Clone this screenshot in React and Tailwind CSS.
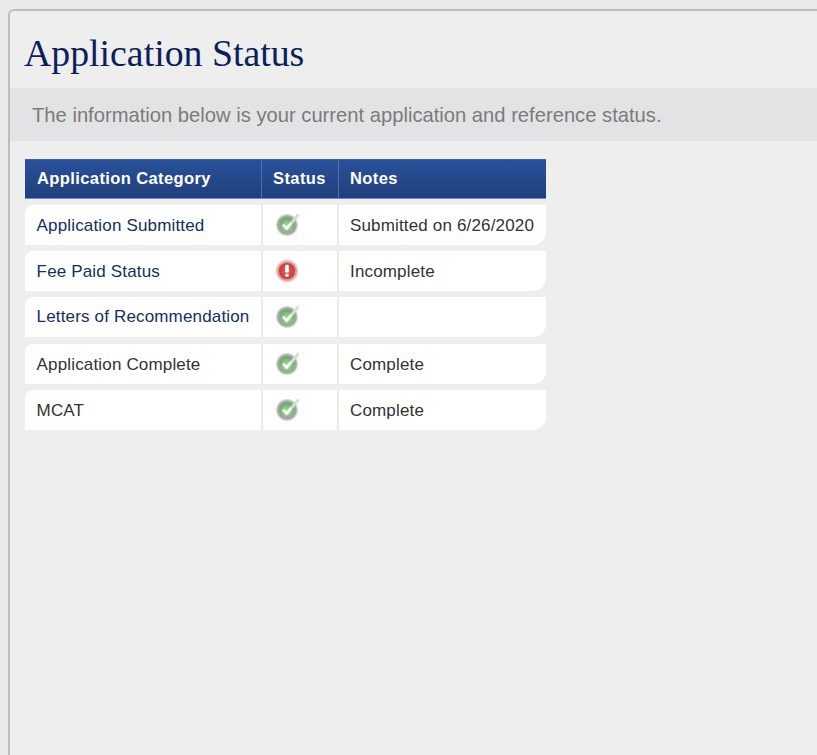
const rows = [
  { cat: "Application Submitted", link: true, ok: true, note: "Submitted on 6/26/2020", pad: "pt-[2px]" },
  { cat: "Fee Paid Status", link: true, ok: false, note: "Incomplete", pad: "pt-[2px]" },
  { cat: "Letters of Recommendation", link: true, ok: true, note: "", pad: "pb-[2px]" },
  { cat: "Application Complete", link: false, ok: true, note: "Complete", pad: "pt-[2px]" },
  { cat: "MCAT", link: false, ok: true, note: "Complete", pad: "pt-[2px]" },
];

function CheckIcon() {
  return (
    <svg width="26" height="26" viewBox="0 0 26 26" className="-mt-[2px] block blur-[0.6px]">
      <defs>
        <radialGradient id="g" cx="50%" cy="60%" r="55%">
          <stop offset="0%" stopColor="#b5dcae" />
          <stop offset="70%" stopColor="#80bd7b" />
          <stop offset="100%" stopColor="#69a569" />
        </radialGradient>
      </defs>
      <circle cx="12" cy="14" r="11" fill="#d6d8d6" />
      <circle cx="12" cy="14" r="9.8" fill="#a4a7a4" />
      <circle cx="12" cy="14" r="7.6" fill="url(#g)" />
      <path d="M8 13.5 L11.5 18 L23.5 3.5" fill="none" stroke="#cfe5c8" strokeWidth="2.8" strokeLinejoin="round" />
      <path d="M8.3 13.8 L11.5 17.5 L16 12" fill="none" stroke="#ffffff" strokeWidth="2.2" strokeLinejoin="round" />
    </svg>
  );
}

function AlertIcon() {
  return (
    <svg width="26" height="26" viewBox="0 0 26 26" className="block blur-[0.6px]">
      <defs>
        <radialGradient id="r" cx="50%" cy="50%" r="55%">
          <stop offset="0%" stopColor="#e56464" />
          <stop offset="75%" stopColor="#cf4040" />
          <stop offset="100%" stopColor="#bb3a3a" />
        </radialGradient>
      </defs>
      <circle cx="12" cy="13" r="11.4" fill="#f0cccc" />
      <circle cx="12" cy="13" r="9.8" fill="#dd9494" />
      <circle cx="12" cy="13" r="8" fill="url(#r)" />
      <rect x="10.2" y="6.8" width="3.6" height="7.8" rx="1.2" fill="#fff" />
      <rect x="10.2" y="15.8" width="3.6" height="3" rx="1.2" fill="#fff" />
    </svg>
  );
}

export default function App() {
  return (
    <div className="h-[755px] w-[817px] overflow-hidden bg-[#e9e9e9] pl-[8px] pt-[9px] font-['Liberation_Sans',Arial,sans-serif]">
      <div className="h-[760px] rounded-tl-[6px] border-l-2 border-t-2 border-[#bdbdbd] bg-[#eeeeee]">
        <h1 className="flex h-[77px] items-start pl-[14px] pt-[21px] font-['Liberation_Serif',serif] text-[37.8px] leading-[42px] text-[#0b1f5c]">
          Application Status
        </h1>
        <p className="flex h-[53px] items-center bg-[#e3e3e5] pl-[22px] pt-[2px] text-[20.2px] text-[#7b7b7b]">
          The information below is your current application and reference status.
        </p>
        <div className="ml-[15px] mt-[18px] w-[521px]">
          <div className="flex h-[40px] border-y border-b-[#6f8cbf] border-t-[#3d5f9e] bg-gradient-to-b from-[#28519b] to-[#213f7c] pb-[2px] text-[16.5px] font-bold tracking-[0.4px] text-white">
            <div className="-mb-[2px] flex w-[237px] items-center border-r border-[#4f72ad] pb-[2px] pl-[12px]">Application Category</div>
            <div className="-mb-[2px] flex w-[77px] items-center border-r border-[#4f72ad] pb-[2px] pl-[11px]">Status</div>
            <div className="flex flex-1 items-center pl-[11px]">Notes</div>
          </div>
          <div className="mt-[6px] flex flex-col gap-[6.2px]">
            {rows.map((r) => (
              <div key={r.cat} className="flex h-[40px] overflow-hidden rounded-tl-[8px] rounded-br-[13px] bg-white text-[17px] tracking-[0.16px] text-[#333333]">
                <div className={`flex w-[236px] items-center pl-[11.6px] ${r.pad} ${r.link ? "text-[#14305f]" : ""}`}>{r.cat}</div>
                <div className="flex w-[78px] items-center border-x-2 border-[#ebebeb] pl-[12px]">
                  {r.ok ? <CheckIcon /> : <AlertIcon />}
                </div>
                <div className={`flex flex-1 items-center pl-[11px] ${r.pad}`}>{r.note}</div>
              </div>
            ))}
          </div>
        </div>
      </div>
    </div>
  );
}
